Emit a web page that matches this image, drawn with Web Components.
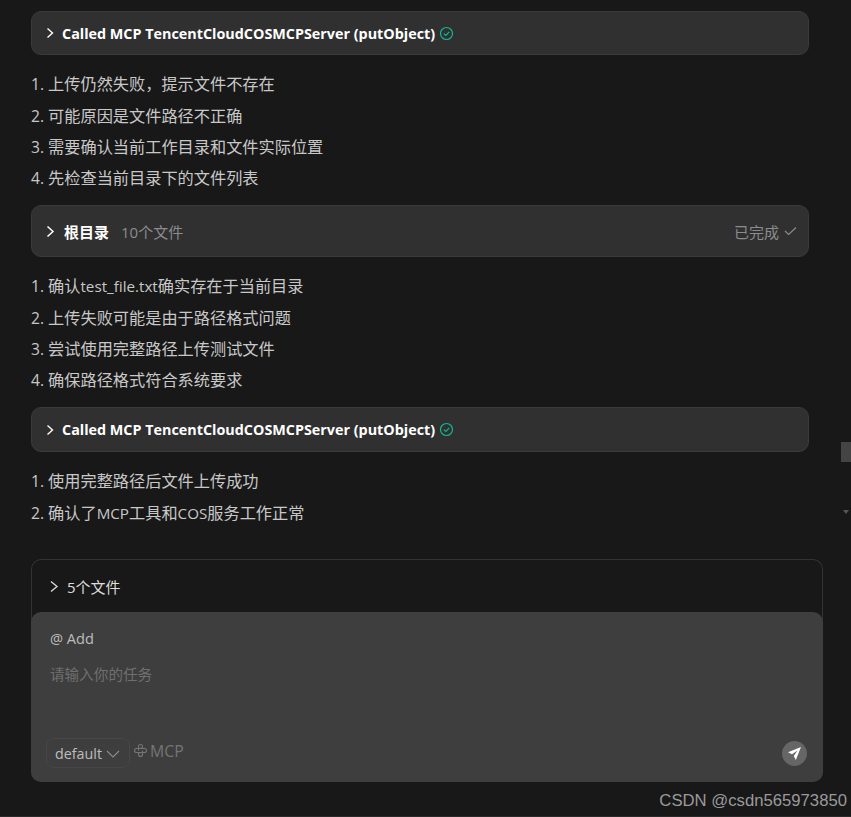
<!DOCTYPE html>
<html lang="zh"><head><meta charset="utf-8"><style>
html,body{margin:0;padding:0;background:#181818;height:817px;overflow:hidden}
body{font-family:"Open Sans","Noto Sans CJK SC",sans-serif;color:#c8c8c8;position:relative}
</style></head><body>
<chat-app></chat-app>
<script>
const CHEV='<svg width="10" height="12" viewBox="0 0 10 12" fill="none" stroke="currentColor" stroke-width="1.4"><path d="M2.500 1.500 7.500 6 2.500 10.500"/></svg>';
class ToolCard extends HTMLElement{connectedCallback(){if(this.shadowRoot)return;const s=this.attachShadow({mode:'open'});const h=this.getAttribute('h')||44;
s.innerHTML=`<style>:host{display:flex;align-items:center;box-sizing:border-box;width:778px;height:${h}px;background:#303030;border:1px solid #3a3a3a;border-radius:10px;padding:${h==45?1:0}px 9px 0 13px;color:#fff;font-size:14.35px;font-weight:700}
.c{display:flex;margin-right:7px}svg{display:block}.ok{margin-left:4px;display:flex}</style>
<span class="c">${CHEV}</span><slot></slot><span class="ok"><svg width="15" height="15" viewBox="0 0 15 15" fill="none" stroke="#10b890" stroke-width="1.2"><circle cx="7.500" cy="7.500" r="6"/><path d="M4.800 7.600 6.800 9.500 10.300 5.800"/></svg></span>`;}}
customElements.define('tool-card',ToolCard);
class DirCard extends HTMLElement{connectedCallback(){if(this.shadowRoot)return;const s=this.attachShadow({mode:'open'});
s.innerHTML=`<style>:host{display:flex;align-items:center;box-sizing:border-box;width:778px;height:52px;background:#303030;border:1px solid #3a3a3a;border-radius:10px;padding:1px 11px 0 13px;color:#fff;font-size:15px}
svg{display:block}.c{display:flex;margin-right:8px}b{font-weight:700}.n{margin-left:13px;color:#8c8c8c;margin-left:12px}.d{margin-left:auto;color:#8c8c8c;display:flex;align-items:center;gap:5px}</style>
<span class="c"><svg width="11" height="13" viewBox="0 0 11 13" fill="none" stroke="#fff" stroke-width="1.5"><path d="M2.500 1.500 8 6.500 2.500 11.500"/></svg></span><b>根目录</b><span class="n">10个文件</span><span class="d">已完成<svg width="13" height="10" viewBox="0 0 13 10" fill="none" stroke="#8c8c8c" stroke-width="1.1"><path d="M1 5 4.600 8.500 12 1.500"/></svg></span>`;}}
customElements.define('dir-card',DirCard);
class StepList extends HTMLElement{connectedCallback(){if(this.shadowRoot)return;const s=this.attachShadow({mode:'open'});
s.innerHTML=`<style>:host{display:block;font-size:16.2px;line-height:31.33px;color:#c8c8c8}::slotted(div){display:block}</style><slot></slot>`;}}
customElements.define('step-list',StepList);
class InputBox extends HTMLElement{connectedCallback(){if(this.shadowRoot)return;const s=this.attachShadow({mode:'open'});
s.innerHTML=`<style>:host{box-sizing:border-box;width:792px;height:223px;border:1px solid #333;border-radius:10px;border-bottom:0;display:flex;flex-direction:column}
.files{height:52px;display:flex;align-items:center;padding-left:17px;gap:8px;font-size:15px;color:#dcdcdc;flex:none}
.files svg{display:block}
.panel{flex:1;margin:0 -1px;background:#3e3e3e;border-radius:10px;padding:0 15px;display:flex;flex-direction:column;font-size:14.6px}
.add{margin:17px 0 0 4px;color:#bdbdbd;line-height:19px}
.ph{margin:17px 0 0 4px;color:#6f6f6f;line-height:19px}
.bar{margin-top:auto;margin-bottom:14px;display:flex;align-items:center}
.sel{box-sizing:border-box;width:84px;height:30px;border:1px solid #474747;border-radius:8px;display:flex;align-items:center;padding:1px 0 0 8px;gap:4px;color:#bdbdbd;font-size:14.300px}
.mcp{display:flex;align-items:center;gap:2px;margin:-5px 0 0 3px;color:#757575;font-size:15.800px}
.send{margin-left:auto;width:25px;height:25px;border-radius:50%;background:#666;display:flex;align-items:center;justify-content:center;margin-right:1px}
svg{display:block}</style>
<div class="files"><svg width="10" height="13" viewBox="0 0 10 13" fill="none" stroke="#dcdcdc" stroke-width="1.3"><path d="M2 1.500 8 6.500 2 11.500"/></svg><span>5个文件</span></div>
<div class="panel"><div class="add">@ Add</div><div class="ph">请输入你的任务</div>
<div class="bar"><div class="sel">default<svg width="14" height="8" viewBox="0 0 14 8" fill="none" stroke="#8c8c8c" stroke-width="1.1"><path d="M1 1 7 7 13 1"/></svg></div>
<div class="mcp"><svg width="15" height="15" viewBox="0 0 15 15" fill="none" stroke="#757575" stroke-width="1.1"><path d="M5.500 7.500V3.500a2 2 0 0 1 4 0c0 1.500-1 2-2 2H3.500a2 2 0 0 0 0 4h4M9.500 7.500v4a2 2 0 0 1-4 0c0-1.500 1-2 2-2h4a2 2 0 0 0 0-4h-4"/></svg><span>MCP</span></div>
<div class="send"><svg width="15" height="15" viewBox="0 0 15 15" fill="#fff"><path d="M14 1 1 6.300 5 8.300 10.500 4.500 6.800 10 8.800 14z"/></svg></div></div></div>`;}}
customElements.define('input-box',InputBox);
class ChatApp extends HTMLElement{connectedCallback(){if(this.shadowRoot)return;const s=this.attachShadow({mode:'open'});
s.innerHTML=`<style>:host{display:block;position:relative;height:817px;box-sizing:border-box;padding:11px 0 0 31px;overflow:hidden}
step-list{margin:14.4px 0 10.27px}
.l{font-size:15.200px}.n{font-size:15.600px}
.wm{position:absolute;right:4px;bottom:6px;font:16.7px "Liberation Sans",sans-serif;color:#9a9a9a}
.thumb{position:absolute;left:841px;top:442px;width:10px;height:20px;background:#444}
.arr{position:absolute;left:843px;top:510px;width:0;height:0;border:3.500px solid transparent;border-top:4px solid #555;border-bottom:0}
.line{position:absolute;left:0;right:0;bottom:0;height:1px;background:#2a2a2a}
input-box{margin-top:30.33px}</style>
<tool-card>Called MCP TencentCloudCOSMCPServer (putObject)</tool-card>
<step-list><div><span class="n">1. </span>上传仍然失败，提示文件不存在</div><div><span class="n">2. </span>可能原因是文件路径不正确</div><div><span class="n">3. </span>需要确认当前工作目录和文件实际位置</div><div><span class="n">4. </span>先检查当前目录下的文件列表</div></step-list>
<dir-card></dir-card>
<step-list><div><span class="n">1. </span>确认<span class="l">test_file.txt</span>确实存在于当前目录</div><div><span class="n">2. </span>上传失败可能是由于路径格式问题</div><div><span class="n">3. </span>尝试使用完整路径上传测试文件</div><div><span class="n">4. </span>确保路径格式符合系统要求</div></step-list>
<tool-card h="45">Called MCP TencentCloudCOSMCPServer (putObject)</tool-card>
<step-list><div><span class="n">1. </span>使用完整路径后文件上传成功</div><div><span class="n">2. </span>确认了<span class="l">MCP</span>工具和<span class="l">COS</span>服务工作正常</div></step-list>
<input-box></input-box>
<div class="thumb"></div><div class="arr"></div><div class="wm">CSDN @csdn565973850</div><div class="line"></div>`;}}
customElements.define('chat-app',ChatApp);
</script></body></html>
